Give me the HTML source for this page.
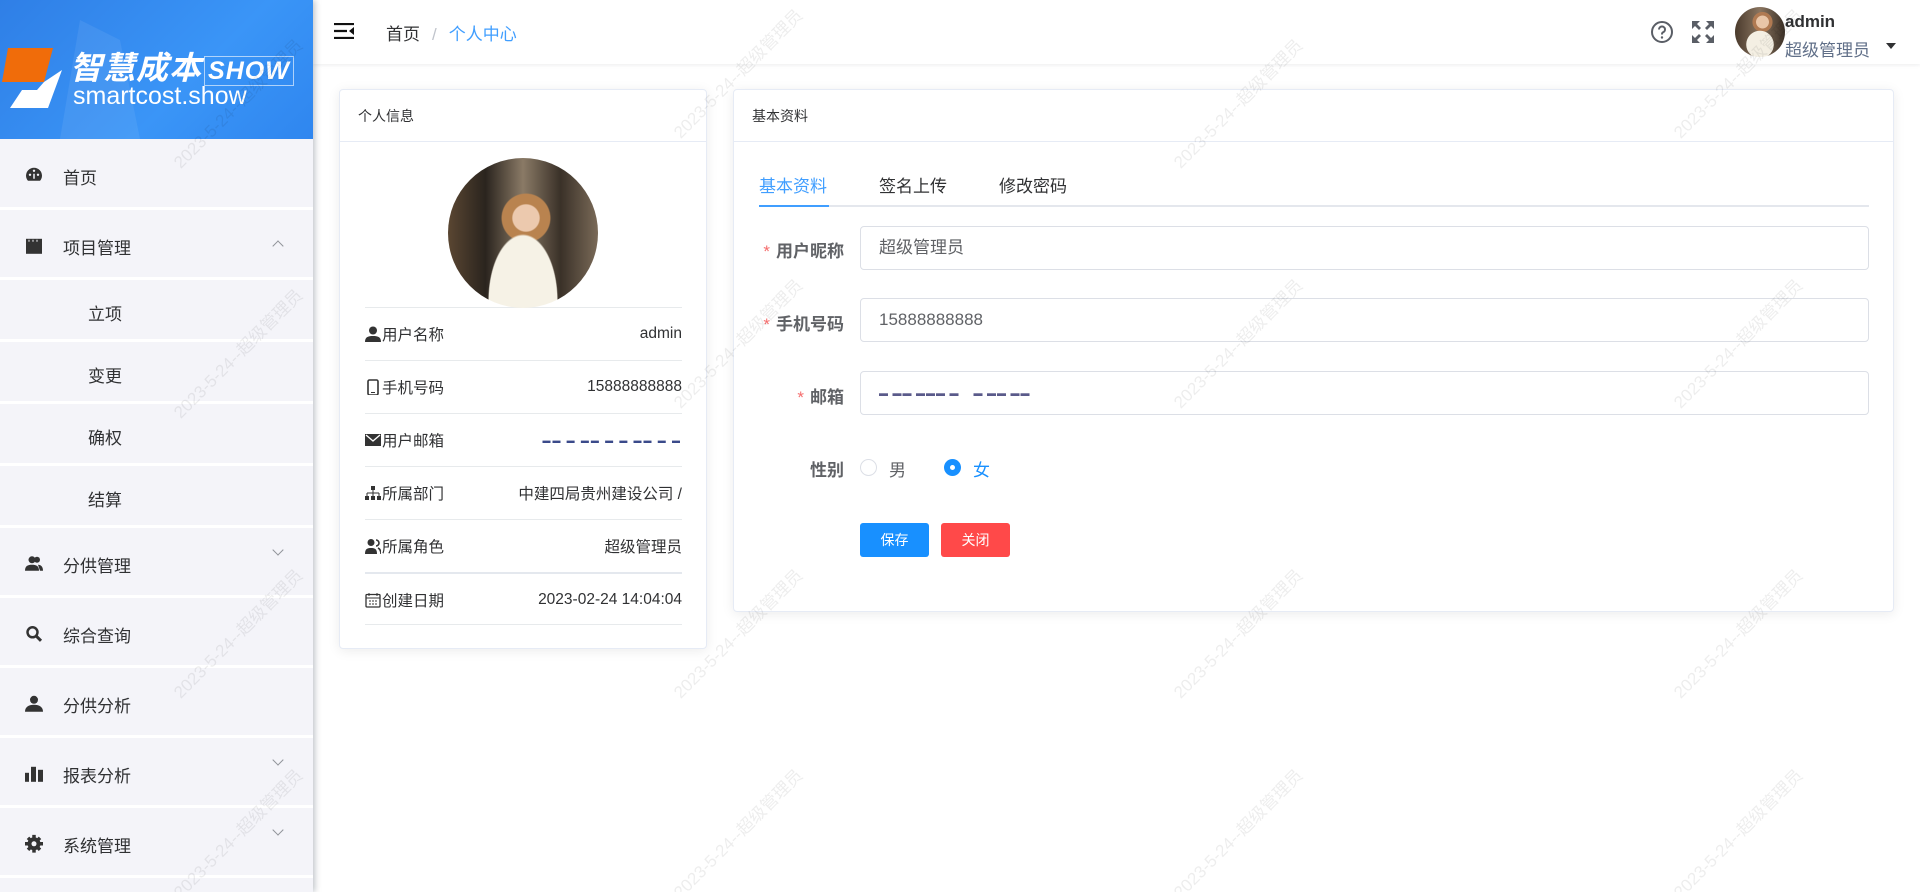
<!DOCTYPE html>
<html><head><meta charset="utf-8">
<style>
*{margin:0;padding:0;box-sizing:border-box}
html,body{width:1920px;height:892px;overflow:hidden}
body{background:#fff;font-family:"Liberation Sans","Noto Sans CJK SC",sans-serif;color:#303133;position:relative}
.side{position:absolute;left:0;top:0;width:313px;height:892px;background:#f4f4f9;box-shadow:2px 0 6px rgba(0,21,41,.25);z-index:2;overflow:hidden}
.logo{height:139px;background:linear-gradient(135deg,#2f7fe6,#3a95f7 60%,#2f86ef);position:relative;overflow:hidden}
.item{position:relative;height:70px;border-bottom:3px solid #fff;font-size:17px;color:#303133;display:flex;align-items:center;padding-top:6px}
.item .ic{position:absolute;left:25px;top:50%;transform:translateY(-40%);width:18px;height:18px}
.item .tx{position:absolute;left:63px}
.item .ar{position:absolute;left:274px;top:24px;width:8px;height:8px;border-left:1px solid #909399;border-top:1px solid #909399}
.sub{height:62px}
.sub .tx{left:88px}
.head{position:absolute;left:313px;top:0;right:0;height:64px;background:#fff;box-shadow:0 1px 4px rgba(0,21,41,.08)}
.card{position:absolute;background:#fff;border:1px solid #e6ebf5;border-radius:4px;box-shadow:0 2px 12px rgba(0,0,0,.08)}
.ch{height:52px;border-bottom:1px solid #e6ebf5;font-size:14px;padding-left:18px;line-height:52px;color:#303133}
.row{position:absolute;left:365px;width:317px;height:53px;border-top:1px solid #e7eaec;font-size:15.5px;display:flex;align-items:center;justify-content:space-between}
.row span{display:flex;align-items:center;gap:1px}
.lbl{position:absolute;width:130px;text-align:right;font-weight:bold;font-size:17px;color:#606266}
.lbl b{color:#f56c6c;font-weight:normal;margin-right:6px}
.inp{position:absolute;left:860px;width:1009px;height:44px;border:1px solid #dcdfe6;border-radius:4px;font-size:17px;color:#606266;padding-left:18px;line-height:42px}
.wm{position:absolute;font-size:17px;color:rgba(0,0,0,.07);transform:rotate(-45deg);white-space:nowrap;z-index:5;pointer-events:none}
</style></head><body>
<div class="side">
 <div class="logo">
  <svg width="313" height="139" style="position:absolute;left:0;top:0">
   <path d="M80 20 L120 40 L140 139 L60 139 Z" fill="rgba(255,255,255,.07)"/>
   <polygon points="8,48 53,48 44,82 24,82 2,82" fill="#f06c0a"/>
   <polygon points="22,90 37,90 44,82 62,70 48,108 10,108" fill="#fff"/>
  </svg>
  <div style="position:absolute;left:70px;top:43px;color:#fff;font-size:32px;font-weight:bold;letter-spacing:1px;font-style:italic">智慧成本<span style="font-size:25px;border:1px solid rgba(255,255,255,.6);padding:0 3px;margin-left:2px">SHOW</span></div>
  <div style="position:absolute;left:73px;top:82px;color:#fff;font-size:25px">smartcost.show</div>
 </div>
 <div class="item" style="height:71px"><svg class="ic" viewBox="0 0 18 18"><path d="M9 2A8 8 0 0 0 1 10c0 2 1 4 2 5h12c1-1 2-3 2-5A8 8 0 0 0 9 2z" fill="#333"/><circle cx="5" cy="9" r="1.2" fill="#f4f4f9"/><circle cx="13" cy="9" r="1.2" fill="#f4f4f9"/><circle cx="9" cy="5" r="1.2" fill="#f4f4f9"/><path d="M9 13V8" stroke="#f4f4f9" stroke-width="1.5"/></svg><span class="tx">首页</span></div>
 <div class="item"><svg class="ic" viewBox="0 0 18 18"><rect x="1" y="2" width="16" height="15" fill="#333"/><path d="M4 3v2M8 3v2M12 3v2" stroke="#f4f4f9"/></svg><span class="tx">项目管理</span><i class="ar" style="transform:rotate(45deg);top:32px"></i></div>
 <div class="item sub"><span class="tx">立项</span></div>
 <div class="item sub"><span class="tx">变更</span></div>
 <div class="item sub"><span class="tx">确权</span></div>
 <div class="item sub"><span class="tx">结算</span></div>
 <div class="item"><svg class="ic" viewBox="0 0 18 18"><circle cx="7" cy="5" r="3.5" fill="#333"/><path d="M0 16c0-5 3-6 7-6s7 1 7 6z" fill="#333"/><circle cx="12" cy="5" r="3" fill="#333"/><path d="M13 10c3 0 5 2 5 6h-3" fill="#333"/></svg><span class="tx">分供管理</span><i class="ar" style="transform:rotate(225deg);top:18px"></i></div>
 <div class="item"><svg class="ic" viewBox="0 0 18 18"><circle cx="7.5" cy="7.5" r="5" fill="none" stroke="#333" stroke-width="2.5"/><path d="M11 11l5 5" stroke="#333" stroke-width="3"/></svg><span class="tx">综合查询</span></div>
 <div class="item"><svg class="ic" viewBox="0 0 18 18"><circle cx="9" cy="5" r="4" fill="#333"/><path d="M0 17c0-5 4-7 9-7s9 2 9 7z" fill="#333"/></svg><span class="tx">分供分析</span></div>
 <div class="item"><svg class="ic" viewBox="0 0 18 18"><rect x="0" y="8" width="4" height="9" fill="#333"/><rect x="6" y="2" width="5" height="15" fill="#333"/><rect x="13" y="5" width="5" height="12" fill="#333"/></svg><span class="tx">报表分析</span><i class="ar" style="transform:rotate(225deg);top:18px"></i></div>
 <div class="item"><svg class="ic" viewBox="0 0 18 18"><circle cx="9" cy="9" r="6.5" fill="#333"/><path d="M9 0v18M0 9h18M3 3l12 12M15 3L3 15" stroke="#333" stroke-width="3.5"/><circle cx="9" cy="9" r="2.5" fill="#f4f4f9"/></svg><span class="tx">系统管理</span><i class="ar" style="transform:rotate(225deg);top:18px"></i></div>
</div>

<div class="head">
 <svg style="position:absolute;left:21px;top:23px" width="20" height="16" viewBox="0 0 20 16"><path d="M0 1h20M0 8h13M0 15h20" stroke="#111" stroke-width="2.2"/><path d="M20 4v8l-5-4z" fill="#111"/></svg>
 <div style="position:absolute;left:73px;top:20px;font-size:17px;color:#303133">首页<span style="color:#c0c4cc;margin:0 12px">/</span><span style="color:#409eff">个人中心</span></div>
 <svg style="position:absolute;left:1337px;top:20px" width="24" height="24" viewBox="0 0 24 24"><circle cx="12" cy="12" r="10" fill="none" stroke="#5a5e66" stroke-width="2"/><path d="M9 9.5a3 3 0 1 1 4 2.8c-1 .4-1 1-1 2.2" fill="none" stroke="#5a5e66" stroke-width="2"/><circle cx="12" cy="17.5" r="1.2" fill="#5a5e66"/></svg>
 <svg style="position:absolute;left:1379px;top:21px" width="22" height="22" viewBox="0 0 22 22" fill="#5a5e66"><path d="M0 0h8L5 3l4 4-2 2-4-4-3 3zM22 0v8l-3-3-4 4-2-2 4-4-3-3zM0 22v-8l3 3 4-4 2 2-4 4 3 3zM22 22h-8l3-3-4-4 2-2 4 4 3-3z"/></svg>
 <div style="position:absolute;left:1422px;top:7px;width:50px;height:50px;border-radius:50%;background:radial-gradient(circle at 50% 75%,#f4efe3 0 30%,transparent 31%),radial-gradient(circle at 55% 30%,#e9c6a8 0 14%,#b07a52 15% 22%,transparent 23%),linear-gradient(90deg,#4a3a2c,#8a7560 50%,#3b3026)"></div>
 <div style="position:absolute;left:1472px;top:12px;font-size:17px;font-weight:bold;color:#303133">admin</div>
 <div style="position:absolute;left:1472px;top:36px;font-size:17px;color:#606f88">超级管理员</div>
 <div style="position:absolute;left:1573px;top:43px;border:5px solid transparent;border-top:6px solid #303133"></div>
</div>

<div class="card" style="left:339px;top:89px;width:368px;height:560px"><div class="ch">个人信息</div></div>
<div style="position:absolute;left:448px;top:158px;width:150px;height:150px;border-radius:50%;background:radial-gradient(ellipse at 50% 95%,#f6f2e6 0 32%,transparent 33%),radial-gradient(circle at 52% 40%,#ecc9ae 0 11%,#b9834f 12% 20%,transparent 21%),linear-gradient(90deg,#5a4632,#2a241e 25%,#8a7a66 50%,#3a3128 75%,#7a6a58);z-index:1"></div>
<div class="row" style="top:307px"><span><svg width="16" height="16" viewBox="0 0 16 16"><circle cx="8" cy="4.5" r="4" fill="#333"/><path d="M0 16c0-5 3-6 8-6s8 1 8 6z" fill="#333"/></svg>用户名称</span><span>admin</span></div>
<div class="row" style="top:360px"><span><svg width="16" height="16" viewBox="0 0 16 16"><rect x="3" y="1" width="10" height="15" rx="1.5" fill="none" stroke="#333" stroke-width="1.6"/><path d="M6 13.5h4" stroke="#333"/></svg>手机号码</span><span>15888888888</span></div>
<div class="row" style="top:413px"><span><svg width="16" height="16" viewBox="0 0 16 16"><rect x="0" y="2" width="16" height="12" fill="#333"/><path d="M1 3l7 6 7-6" stroke="#fff" stroke-width="1.4" fill="none"/></svg>用户邮箱</span><span style="letter-spacing:2px;font-size:8px;color:#3a4a8a">▬▬ ▬ ▬▬ ▬ ▬ ▬▬ ▬ ▬</span></div>
<div class="row" style="top:466px"><span><svg width="16" height="16" viewBox="0 0 16 16" fill="#333"><rect x="6" y="1" width="4" height="4"/><path d="M8 5v3M2 8h12M2 8v3M8 8v3M14 8v3" stroke="#333"/><rect x="0" y="11" width="4" height="4"/><rect x="6" y="11" width="4" height="4"/><rect x="12" y="11" width="4" height="4"/></svg>所属部门</span><span>中建四局贵州建设公司 /</span></div>
<div class="row" style="top:519px"><span><svg width="16" height="16" viewBox="0 0 16 16"><circle cx="6" cy="4.5" r="3.5" fill="#333"/><path d="M0 16c0-5 2-6 6-6s6 1 6 6z" fill="#333"/><path d="M11 2a3 3 0 0 1 0 6M13 10c2 1 3 3 3 6" stroke="#333" stroke-width="1.6" fill="none"/></svg>所属角色</span><span>超级管理员</span></div>
<div class="row" style="top:572px;border-top:2px solid #e4e8ee"><span><svg width="16" height="16" viewBox="0 0 16 16"><rect x="1" y="2.5" width="14" height="12.5" rx="1" fill="none" stroke="#333" stroke-width="1.3"/><path d="M1 6h14M4 1v3M12 1v3M4 9h2M7 9h2M10 9h2M4 12h2M7 12h2M10 12h2" stroke="#333"/></svg>创建日期</span><span>2023-02-24 14:04:04</span></div>
<div style="position:absolute;left:365px;top:624px;width:317px;border-top:1px solid #e7eaec"></div>

<div class="card" style="left:733px;top:89px;width:1161px;height:523px"><div class="ch">基本资料</div></div>
<div style="position:absolute;left:759px;top:172px;font-size:17px;color:#409eff">基本资料</div>
<div style="position:absolute;left:879px;top:172px;font-size:17px;color:#303133">签名上传</div>
<div style="position:absolute;left:999px;top:172px;font-size:17px;color:#303133">修改密码</div>
<div style="position:absolute;left:759px;top:205px;width:1110px;height:2px;background:#e4e7ed"></div>
<div style="position:absolute;left:759px;top:205px;width:70px;height:2px;background:#409eff"></div>

<div class="lbl" style="left:714px;top:237px"><b>*</b>用户昵称</div>
<div class="inp" style="top:226px">超级管理员</div>
<div class="lbl" style="left:714px;top:310px"><b>*</b>手机号码</div>
<div class="inp" style="top:298px">15888888888</div>
<div class="lbl" style="left:714px;top:383px"><b>*</b>邮箱</div>
<div class="inp" style="top:371px;font-size:9px;color:#5a5a8a;letter-spacing:1px">▬ ▬▬ ▬▬▬ ▬ &nbsp;&nbsp; ▬ ▬▬ ▬▬</div>
<div class="lbl" style="left:714px;top:456px">性别</div>
<div style="position:absolute;left:860px;top:459px;width:17px;height:17px;border:1px solid #dcdfe6;border-radius:50%"></div>
<div style="position:absolute;left:889px;top:456px;font-size:17px;color:#606266">男</div>
<div style="position:absolute;left:944px;top:459px;width:17px;height:17px;background:#1890ff;border-radius:50%"><div style="width:5px;height:5px;background:#fff;border-radius:50%;margin:6px"></div></div>
<div style="position:absolute;left:973px;top:456px;font-size:17px;color:#1890ff">女</div>
<div style="position:absolute;left:860px;top:523px;width:69px;height:34px;background:#1890ff;border-radius:3px;color:#fff;font-size:14px;text-align:center;line-height:34px">保存</div>
<div style="position:absolute;left:941px;top:523px;width:69px;height:34px;background:#ff4949;border-radius:3px;color:#fff;font-size:14px;text-align:center;line-height:34px">关闭</div>

<div class="wm" style="left:150px;top:90px">2023-5-24--超级管理员</div>
<div class="wm" style="left:650px;top:60px">2023-5-24--超级管理员</div>
<div class="wm" style="left:1150px;top:90px">2023-5-24--超级管理员</div>
<div class="wm" style="left:1650px;top:60px">2023-5-24--超级管理员</div>
<div class="wm" style="left:150px;top:340px">2023-5-24--超级管理员</div>
<div class="wm" style="left:650px;top:330px">2023-5-24--超级管理员</div>
<div class="wm" style="left:1150px;top:330px">2023-5-24--超级管理员</div>
<div class="wm" style="left:1650px;top:330px">2023-5-24--超级管理员</div>
<div class="wm" style="left:150px;top:620px">2023-5-24--超级管理员</div>
<div class="wm" style="left:650px;top:620px">2023-5-24--超级管理员</div>
<div class="wm" style="left:1150px;top:620px">2023-5-24--超级管理员</div>
<div class="wm" style="left:1650px;top:620px">2023-5-24--超级管理员</div>
<div class="wm" style="left:150px;top:820px">2023-5-24--超级管理员</div>
<div class="wm" style="left:650px;top:820px">2023-5-24--超级管理员</div>
<div class="wm" style="left:1150px;top:820px">2023-5-24--超级管理员</div>
<div class="wm" style="left:1650px;top:820px">2023-5-24--超级管理员</div>
</body></html>
